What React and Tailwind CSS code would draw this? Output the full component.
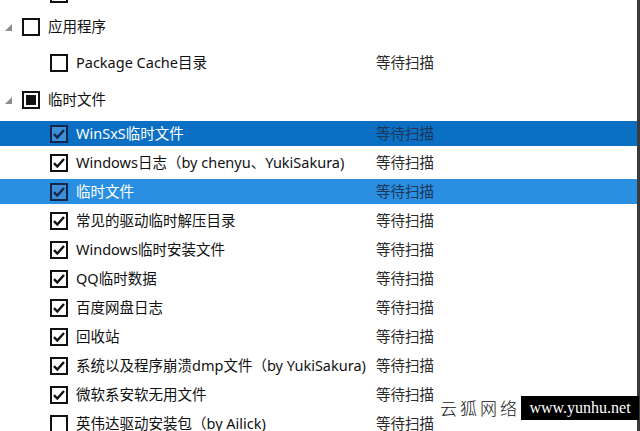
import React from 'react';

const FONT = "font-['Noto_Sans','Noto_Sans_CJK_SC',sans-serif]";

const Checkbox = ({ state, selected }) => {
  const border = selected ? 'border-[#15264a]' : 'border-[#111]';
  const fill = selected ? 'bg-[#3b8fd6]' : 'bg-white';
  const mark = selected ? '#15264a' : '#111';
  return (
    <div className={`w-[18px] h-[18px] border-2 ${border} ${fill} flex items-center justify-center shrink-0`}>
      {state === 'checked' && (
        <svg width="14" height="14" viewBox="0 0 14 14">
          <path d="M2 7.2 L5.3 10.6 L12 3" fill="none" stroke={mark} strokeWidth="2.4" />
        </svg>
      )}
      {state === 'partial' && <div className="w-[10px] h-[10px] bg-[#111]" />}
    </div>
  );
};

const Expander = () => (
  <svg width="7" height="7" viewBox="0 0 7 7" className="shrink-0">
    <polygon points="7,0 7,7 0,7" fill="#8c8c8c" />
  </svg>
);

const GroupRow = ({ state, label, height }) => (
  <div className={`${height} shrink-0 flex items-center pl-[5px]`}>
    <Expander />
    <div className="ml-[10px]">
      <Checkbox state={state} />
    </div>
    <span className="ml-[8px] text-[14.5px] text-[#111]">{label}</span>
  </div>
);

const ItemRow = ({ state, label, status, highlight, height = 'h-[29px]' }) => {
  let bg = '';
  let nameColor = 'text-[#111]';
  let statusColor = 'text-[#2a2a2a]';
  if (highlight === 'focus') {
    bg = 'bg-[#0b70c4]';
    nameColor = 'text-white';
    statusColor = 'text-[#1b3656]';
  } else if (highlight === 'hover') {
    bg = 'bg-[#2a8fe0]';
    nameColor = 'text-white';
    statusColor = 'text-[#1b3656]';
  }
  return (
    <div className={`${height} shrink-0 py-[2px]`}>
      <div className={`h-full flex items-center ${bg}`}>
        <div className="w-[376px] flex items-center pl-[50px] shrink-0">
          <Checkbox state={state} selected={!!highlight} />
          <span className={`ml-[8px] text-[14.5px] whitespace-nowrap ${nameColor}`}>{label}</span>
        </div>
        {status && <span className={`text-[14.5px] whitespace-nowrap ${statusColor}`}>{status}</span>}
      </div>
    </div>
  );
};

const items = [
  { state: 'checked', label: 'WinSxS临时文件', highlight: 'focus' },
  { state: 'checked', label: 'Windows日志（by chenyu、YukiSakura)' },
  { state: 'checked', label: '临时文件', highlight: 'hover' },
  { state: 'checked', label: '常见的驱动临时解压目录' },
  { state: 'checked', label: 'Windows临时安装文件' },
  { state: 'checked', label: 'QQ临时数据' },
  { state: 'checked', label: '百度网盘日志' },
  { state: 'checked', label: '回收站' },
  { state: 'checked', label: '系统以及程序崩溃dmp文件（by YukiSakura)' },
  { state: 'checked', label: '微软系安软无用文件' },
  { state: 'empty', label: '英伟达驱动安装包（by Ailick)' },
];

export default function App() {
  return (
    <div className={`relative w-[640px] h-[431px] overflow-hidden bg-white flex ${FONT}`}>
      <div className="flex-1 flex flex-col">
        <div className="-mt-[21px] shrink-0">
          <ItemRow state="checked" label="" height="h-[30px]" />
        </div>
        <GroupRow state="empty" label="应用程序" height="h-[36px]" />
        <ItemRow state="empty" label="Package Cache目录" status="等待扫描" height="h-[36px]" />
        <GroupRow state="partial" label="临时文件" height="h-[38px]" />
        {items.map((it) => (
          <ItemRow key={it.label} {...it} status="等待扫描" />
        ))}
      </div>
      <div className="w-[3px] bg-[#3a3a3a] shrink-0" />

      {/* watermark */}
      <div className="absolute left-[440px] top-[396px] w-max flex items-center whitespace-nowrap">
        <span className="text-[17px] leading-[24px] tracking-[3px] text-[#111] font-light font-['Noto_Sans_CJK_SC',serif]">云狐网络</span>
        <div className="ml-[1px] w-[118px] h-[24px] bg-black flex items-center justify-center">
          <span className="text-white text-[16px] font-['Liberation_Serif',serif]">www.yunhu.net</span>
        </div>
      </div>
    </div>
  );
}
